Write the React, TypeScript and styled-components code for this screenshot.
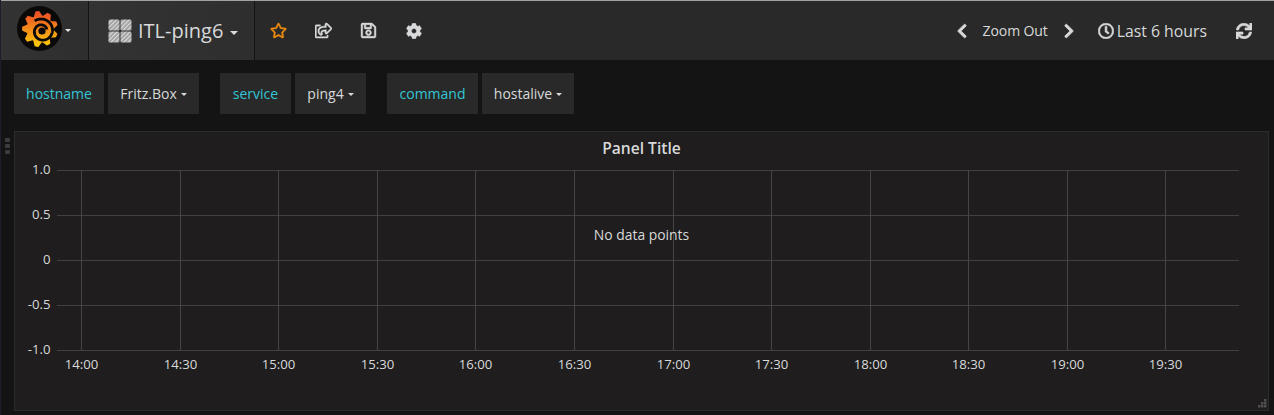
import React from "react";
import styled, { createGlobalStyle } from "styled-components";
import {
  FaRegStar,
  FaRegShareSquare,
  FaRegSave,
  FaCog,
  FaChevronLeft,
  FaChevronRight,
  FaRegClock,
  FaSync
} from "react-icons/fa";

const GlobalStyle = createGlobalStyle`
  html, body {
    margin: 0;
    padding: 0;
    background: #141414;
    font-family: "Open Sans", "Liberation Sans", sans-serif;
    color: #d8d9da;
  }
  * {
    box-sizing: border-box;
  }
`;

const Page = styled.div`
  width: 1274px;
  height: 415px;
  overflow: hidden;
  border-left: 1px solid #1c2028;
`;

const Navbar = styled.div`
  display: flex;
  align-items: stretch;
  height: 60px;
  background: #292929;
  border-top: 1px solid #a2a2a2;
`;

const NavSection = styled.div<{ width: number }>`
  display: flex;
  align-items: center;
  width: ${({ width }) => width}px;
  background: linear-gradient(to right, #333 0%, #2e2e2e 100%);
  border-right: 1px solid #141414;
`;

const LogoButton = styled(NavSection)`
  padding-left: 16px;
`;

const LogoWrap = styled.span`
  display: flex;
  margin-bottom: 5px;
`;

const TitleButton = styled(NavSection)`
  padding-left: 19px;
`;

const Caret = styled.span<{ $size?: number; $color?: string }>`
  display: inline-block;
  width: 0;
  height: 0;
  border-left: ${({ $size = 3.5 }) => $size}px solid transparent;
  border-right: ${({ $size = 3.5 }) => $size}px solid transparent;
  border-top: ${({ $size = 3.5 }) => $size}px solid ${({ $color = "#d8d9da" }) => $color};
`;

const LogoCaret = styled(Caret)`
  margin-left: 3px;
`;

const Title = styled.span`
  margin-left: 6px;
  font-size: 20px;
  color: #d8d9da;
  line-height: 60px;
`;

const TitleCaret = styled(Caret)`
  margin-left: 7px;
  margin-top: 5px;
`;

const ActionGroup = styled.div`
  display: flex;
  align-items: center;
  padding-left: 14px;
  gap: 26px;
  color: #d8d9da;
`;

const ActionIcon = styled.span<{ $color?: string; $size?: number }>`
  display: flex;
  width: 19px;
  justify-content: center;
  font-size: ${({ $size = 17 }) => $size}px;
  color: ${({ $color = "#d8d9da" }) => $color};
  svg {
    stroke: currentColor;
    stroke-width: 14px;
  }
`;

const RightGroup = styled.div`
  margin-left: auto;
  display: flex;
  align-items: center;
  padding-right: 22px;
  color: #d8d9da;
`;

const Chevron = styled.span`
  display: flex;
  font-size: 16px;
  svg {
    stroke: currentColor;
    stroke-width: 24px;
  }
`;

const ZoomOut = styled.span`
  margin: 0 13px;
  font-size: 14px;
  letter-spacing: -0.1px;
`;

const TimeRange = styled.span`
  display: flex;
  align-items: center;
  margin-left: 21px;
  font-size: 15.800px;
`;

const ClockIcon = styled.span`
  display: flex;
  margin-right: 3px;
  font-size: 16px;
  svg {
    stroke: currentColor;
    stroke-width: 20px;
  }
`;

const RefreshIcon = styled.span`
  display: flex;
  margin-left: 29px;
  font-size: 16px;
  svg {
    stroke: currentColor;
    stroke-width: 20px;
  }
`;

const Submenu = styled.div`
  display: flex;
  padding: 13px 0 0 13px;
  height: 71px;
`;

const VarGroup = styled.div`
  display: flex;
  gap: 4px;
  margin-right: 21px;
`;

const VarCell = styled.div<{ $width: number; $label?: boolean }>`
  display: flex;
  align-items: center;
  justify-content: center;
  gap: 4px;
  width: ${({ $width }) => $width}px;
  height: 41px;
  background: #292929;
  border-radius: 1px;
  font-size: 14px;
  color: ${({ $label }) => ($label ? "#33c5d5" : "#d8d9da")};
`;

const VarCaret = styled(Caret)`
  margin-top: 2px;
`;

const Panel = styled.div`
  position: relative;
  margin-left: 13px;
  width: 1255px;
  height: 280px;
  background: #1f1d1d;
  border: 1px solid #2b2b2b;
`;

const PanelTitle = styled.div`
  height: 36px;
  text-align: center;
  font-size: 15.600px;
  font-weight: 600;
  line-height: 33px;
  color: #d8d9da;
`;

const ChartSvg = styled.svg`
  display: block;
  overflow: visible;
  font-family: "Open Sans", "Liberation Sans", sans-serif;
  font-size: 13.200px;
  fill: #d8d9da;
`;

const NoData = styled.div`
  position: absolute;
  left: 0;
  right: 0;
  top: 94px;
  text-align: center;
  font-size: 13.900px;
  line-height: 18px;
  color: #d8d9da;
`;

const DragHandle = styled.div`
  position: absolute;
  left: -10px;
  top: 6px;
  display: flex;
  flex-direction: column;
  gap: 2px;
`;

const DragDot = styled.span`
  width: 5px;
  height: 4px;
  border-radius: 1px;
  background: #3c3c3c;
`;

const ResizeHandle = styled.svg`
  position: absolute;
  right: 1px;
  bottom: 1px;
  fill: #505050;
`;

// gear outline of the logo, nine teeth round (23, 23)
const gearPath = () => {
  const teeth = 9;
  const pts: string[] = [];
  for (let i = 0; i < teeth; i++) {
    const a = (i / teeth) * Math.PI * 2 - Math.PI / 2 - 0.12;
    const step = (Math.PI * 2) / teeth;
    [
      [13.5, -0.5],
      [18, -0.2],
      [18, 0.1],
      [13.5, 0.42]
    ].forEach(([r, f]) => {
      const x = 23 + r * Math.cos(a + f * step);
      const y = 23 + r * Math.sin(a + f * step);
      pts.push(`${x.toFixed(2)} ${y.toFixed(2)}`);
    });
  }
  return `M${pts.join("L")}Z`;
};

// dark band of the swirl, from the outside clockwise into the middle
const swirlPath = () => {
  const pts: string[] = [];
  const steps = 80;
  for (let i = 0; i <= steps; i++) {
    const t = i / steps;
    const a = Math.PI * 1.3 + t * Math.PI * 2.6;
    const r = 12.5 - t * 7.5;
    const x = 25 + r * Math.cos(a);
    const y = 25 + r * Math.sin(a);
    pts.push(`${x.toFixed(2)} ${y.toFixed(2)}`);
  }
  return `M${pts.join("L")}`;
};

const GrafanaLogo = () => (
  <svg width="45" height="45" viewBox="0 0 45 45">
    <defs>
      <linearGradient id="grafanaFill" gradientUnits="userSpaceOnUse" x1="0" y1="8" x2="0" y2="40">
        <stop offset="0" stopColor="#ee5326" />
        <stop offset="1" stopColor="#fbca0a" />
      </linearGradient>
    </defs>
    <circle cx="22.5" cy="22.5" r="22.500" fill="#0b0908" />
    <path fill="url(#grafanaFill)" d={gearPath()} />
    <path fill="none" stroke="#0b0908" strokeWidth="2.8" d={swirlPath()} />
    <circle cx="25" cy="25" r="3.600" fill="#0b0908" />
  </svg>
);

const DashboardIcon = () => (
  <svg width="24" height="24" viewBox="0 0 24 24">
    <defs>
      <pattern id="hatch" width="3" height="3" patternUnits="userSpaceOnUse" patternTransform="rotate(45)">
        <rect width="3" height="3" fill="#9c9c9c" />
        <rect width="1.300" height="3" fill="#dcdcdc" />
      </pattern>
    </defs>
    <rect x="0.500" y="0.500" width="11" height="11" rx="1.500" fill="url(#hatch)" />
    <rect x="12.500" y="0.500" width="11" height="11" rx="1.500" fill="url(#hatch)" />
    <rect x="0.500" y="12.500" width="11" height="11" rx="1.500" fill="url(#hatch)" />
    <rect x="12.500" y="12.500" width="11" height="11" rx="1.500" fill="url(#hatch)" />
  </svg>
);

const variables = [
  { name: "hostname", nameWidth: 90, value: "Fritz.Box", valueWidth: 91 },
  { name: "service", nameWidth: 71, value: "ping4", valueWidth: 71 },
  { name: "command", nameWidth: 91, value: "hostalive", valueWidth: 92 }
];

// positions are relative to the svg, which starts at x=15, y=168 of the page
const yTicks = [
  { label: "1.0", y: 2 },
  { label: "0.5", y: 47 },
  { label: "0", y: 92 },
  { label: "-0.5", y: 137 },
  { label: "-1.0", y: 182 }
];

const xTicks = [
  { label: "14:00", x: 66.5 },
  { label: "14:30", x: 165.5 },
  { label: "15:00", x: 263.5 },
  { label: "15:30", x: 362.5 },
  { label: "16:00", x: 460.5 },
  { label: "16:30", x: 559.5 },
  { label: "17:00", x: 658.5 },
  { label: "17:30", x: 756.5 },
  { label: "18:00", x: 855.5 },
  { label: "18:30", x: 953.5 },
  { label: "19:00", x: 1052.5 },
  { label: "19:30", x: 1150.5 }
];

const Chart = () => (
  <ChartSvg width="1253" height="240" viewBox="0 0 1253 240">
    {yTicks.map(t => (
      <g key={t.label}>
        <line x1="42" x2="1224" y1={t.y + 0.5} y2={t.y + 0.5} stroke="#414141" />
        <text x="35.5" y={t.y + 4} textAnchor="end">
          {t.label}
        </text>
      </g>
    ))}
    {xTicks.map(t => (
      <g key={t.label}>
        <line x1={t.x} x2={t.x} y1="2" y2="182" stroke="#454545" />
        <text x={t.x} y="201" textAnchor="middle">
          {t.label}
        </text>
      </g>
    ))}
  </ChartSvg>
);

export default function App() {
  return (
    <Page>
      <GlobalStyle />
      <Navbar>
        <LogoButton width={88}>
          <LogoWrap>
            <GrafanaLogo />
          </LogoWrap>
          <LogoCaret $color="#e8e8e8" />
        </LogoButton>
        <TitleButton width={166}>
          <DashboardIcon />
          <Title>ITL-ping6</Title>
          <TitleCaret $size={4} />
        </TitleButton>
        <ActionGroup>
          <ActionIcon $color="#eb8c10">
            <FaRegStar />
          </ActionIcon>
          <ActionIcon>
            <FaRegShareSquare />
          </ActionIcon>
          <ActionIcon>
            <FaRegSave />
          </ActionIcon>
          <ActionIcon $size={16}>
            <FaCog />
          </ActionIcon>
        </ActionGroup>
        <RightGroup>
          <Chevron>
            <FaChevronLeft />
          </Chevron>
          <ZoomOut>Zoom Out</ZoomOut>
          <Chevron>
            <FaChevronRight />
          </Chevron>
          <TimeRange>
            <ClockIcon>
              <FaRegClock />
            </ClockIcon>
            Last 6 hours
          </TimeRange>
          <RefreshIcon>
            <FaSync />
          </RefreshIcon>
        </RightGroup>
      </Navbar>
      <Submenu>
        {variables.map(v => (
          <VarGroup key={v.name}>
            <VarCell $width={v.nameWidth} $label>
              {v.name}
            </VarCell>
            <VarCell $width={v.valueWidth}>
              {v.value}
              <VarCaret />
            </VarCell>
          </VarGroup>
        ))}
      </Submenu>
      <Panel>
        <DragHandle>
          <DragDot />
          <DragDot />
          <DragDot />
        </DragHandle>
        <PanelTitle>Panel Title</PanelTitle>
        <Chart />
        <NoData>No data points</NoData>
        <ResizeHandle width="10" height="10" viewBox="0 0 10 10">
          <rect x="7" y="0" width="2.500" height="2.500" />
          <rect x="4" y="3" width="2.500" height="2.500" />
          <rect x="7" y="3" width="2.500" height="2.500" />
          <rect x="1" y="6" width="2.500" height="2.500" />
          <rect x="4" y="6" width="2.500" height="2.500" />
          <rect x="7" y="6" width="2.500" height="2.500" />
        </ResizeHandle>
      </Panel>
    </Page>
  );
}
